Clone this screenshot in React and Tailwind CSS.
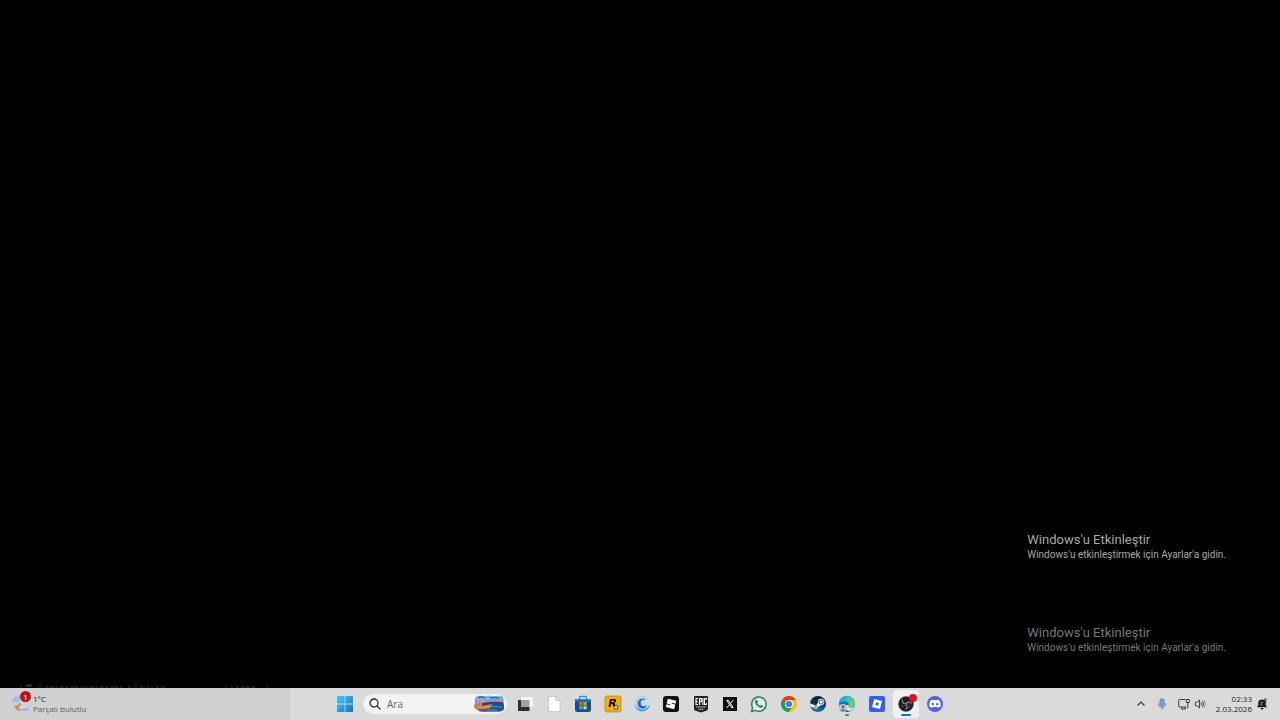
import React from "react";

const Start = () => (
  <svg viewBox="0 0 16 16" className="h-4 w-4">
    <defs>
      <linearGradient id="start" x1="0" y1="0" x2="1" y2="1">
        <stop offset="0" stopColor="#4fc5f0" />
        <stop offset="1" stopColor="#0a76c8" />
      </linearGradient>
    </defs>
    <path fill="url(#start)" d="M0 .6Q0 0 .6 0H7.6V7.6H0zM8.4 0H15.4Q16 0 16 .6V7.6H8.4zM0 8.4H7.6V16H.6Q0 16 0 15.4zM8.4 8.4H16V15.4Q16 16 15.4 16H8.4z" />
  </svg>
);

const Search = () => (
  <svg viewBox="0 0 12 12" className="h-3 w-3 shrink-0" fill="none" stroke="#2b2b2b" strokeWidth="1.3" strokeLinecap="round">
    <circle cx="5" cy="5" r="4" />
    <path d="M8 8l3 3" />
  </svg>
);

const SearchArt = () => (
  <svg viewBox="0 0 32 18" className="h-[18px] w-8 shrink-0">
    <path d="M3 2Q6 0 10 1.5Q16 0 21 1.5Q27 0 30 2Q31 4 30.500 7L31 14Q30 16.500 26 16.500H12Q6 17 4 15L1 12L2 8Q1 5 3 2z" fill="#8d8fc4" />
    <path d="M2.500 3Q6 0 10 1.500Q16 0 21 1.500Q27 0 30 3L29 5Q22 4 17 5T3 5z" fill="#78b6e2" />
    <path d="M5 3Q8 1 12 3M17 3.500Q21 1.500 26 3.500" stroke="#38679d" strokeWidth="1.300" fill="none" />
    <path d="M4 6Q9 4 14 6T26 5L30 7V10H3z" fill="#c493b4" />
    <path d="M9 8Q19 6 30 7L31 11H9z" fill="#393f72" />
    <path d="M12 10Q20 8 31 10V14Q29 17 23 16.500H9z" fill="#1d5798" />
    <path d="M16 13Q21 10 29 12.500M14 15H24" stroke="#4ca5d8" fill="none" strokeWidth=".8" />
    <path d="M1 10L5 9L7 6L8 11L19 9Q19 14 14 14Q8 16 3 14z" fill="#cf7243" />
    <path d="M3 11.500Q9 13.500 17 11" stroke="#f0ad6b" fill="none" />
    <path d="M5 15Q12 13 17 15.500L13 16.500H7z" fill="#37659f" />
  </svg>
);

const Weather = () => (
  <svg viewBox="0 0 18 18" className="h-[18px] w-[18px]">
    <path d="M2 7.500a2 2 0 0 1 0-4 3.500 3.500 0 0 1 6-2v6z" fill="#a3c1e8" />
    <path d="M2 10.500Q6 11.500 7.500 8Q9 8 9.500 9.500L8.500 16Q4 16 2 10.500z" fill="#df8c37" />
    <path d="M8.500 15.500a2.600 2.600 0 0 1 0-5 4 4 0 0 1 6.500-.5 2.800 2.800 0 0 1 0 5.500z" fill="#c3d4ec" />
    <path d="M8.500 15.500a2.600 2.600 0 0 1-2-2Q11 15.500 17 12.500Q17 15 15 15.500z" fill="#93afd8" />
  </svg>
);

const TaskView = () => (
  <svg viewBox="0 0 18 18" className="h-[18px] w-[18px]">
    <path d="M2 5H13.500V16H2z" fill="#2e2e2e" />
    <path d="M5 2H17V12H5z" fill="#f3f3f3" />
    <path d="M5 5H13.500V12H5z" fill="#a4a4a4" />
  </svg>
);

const Page = () => (
  <svg viewBox="0 0 18 18" className="h-[18px] w-[18px]">
    <path d="M3.500 1.500H11L15 5.500V16.500H3.500z" fill="#fdfdfd" stroke="#b9b9b9" strokeWidth=".6" />
    <path d="M11 1.500V5.500H15" fill="#e2e2e2" stroke="#a8a8a8" strokeWidth=".6" />
  </svg>
);

const Store = () => (
  <svg viewBox="0 0 18 18" className="h-[18px] w-[18px]">
    <path d="M5.500 5V2.500Q5.500 1.500 6.500 1.500H11.500Q12.500 1.500 12.500 2.500V5" fill="none" stroke="#2999dc" strokeWidth="1.3" />
    <path d="M1 4.500H17V14.500Q17 17 14.500 17H3.500Q1 17 1 14.500z" fill="#164f86" />
    <path d="M1 4.500H17V7H1z" fill="#1b6dab" />
    <path d="M5.300 7H8.600V10.300H5.300z" fill="#ee6242" />
    <path d="M9.400 7H12.700V10.300H9.400z" fill="#86c440" />
    <path d="M5.300 11.100H8.600V14.400H5.300z" fill="#36aeea" />
    <path d="M9.400 11.100H12.700V14.400H9.400z" fill="#f7c335" />
  </svg>
);

const Rockstar = () => (
  <svg viewBox="0 0 18 18" className="h-[18px] w-[18px]">
    <rect x="1" y="1" width="16" height="16" rx="2" fill="#f7ae15" stroke="#a8730f" strokeWidth=".6" />
    <path fill="#16120a" fillRule="evenodd" d="M6 4H10.300Q12.600 4 12.100 6Q11.800 7.700 10.300 8Q11.300 8.500 11 10.200L10.800 11H8.900Q9.100 8.900 8 8.900H7.100L6.500 12H4.500zM7.600 5.500L7.200 7.300H9Q9.900 7.300 10.100 6.300Q10.200 5.500 9.500 5.500z" />
    <path d="M12 9.500l.7 1.800h2l-1.600 1.300.6 2-1.700-1.200-1.800 1.200.6-2-1.600-1.300h2.100z" fill="#fff" stroke="#16120a" strokeWidth=".6" />
  </svg>
);

const Swirl = () => (
  <svg viewBox="0 0 18 18" className="h-[18px] w-[18px]">
    <circle cx="9" cy="9" r="7.500" fill="#76c5ee" />
    <path d="M1.500 8Q3 1 11 1.500Q15 2 16.500 4Q9 2 6 6T6 14Q2 13 1.500 8z" fill="#a5dbf4" />
    <circle cx="9.500" cy="8.500" r="4.800" fill="#4850bb" />
    <circle cx="11" cy="8" r="3.300" fill="#c4d9f6" />
    <path d="M11 3.500Q16 4 16.500 9Q16 14 11 15Q15 11 14 7.500Q13.500 5 11 3.500z" fill="#d5edfa" />
    <path d="M2 10Q5 15.500 10 14.500Q14 14 16.500 9Q17 16 9 16.500Q3 16 2 10z" fill="#46a9df" />
  </svg>
);

const RobloxStudio = () => (
  <svg viewBox="0 0 18 18" className="h-[18px] w-[18px]">
    <rect x="1" y="1" width="16" height="16" rx="3" fill="#111" />
    <path d="M5.700 3.700L14.200 5.800L13.500 8.700L9.800 7.800L9.600 8.600L13.200 9.500L12.200 14.200L3.800 12.100L4.500 9.300L8.200 10.200L8.400 9.400L4.700 8.500z" fill="#fff" />
  </svg>
);

const Epic = () => (
  <svg viewBox="0 0 18 18" className="h-[18px] w-[18px]">
    <path d="M3 1H15Q16 1 16 2V14Q16 15 15 15.400L9 17.500L3 15.400Q2 15 2 14V2Q2 1 3 1z" fill="#222" />
    <path d="M6 3.500H4V9.500H6M4 6.500H5.800M7.500 10V3.500H9.300V6.800H7.500M10.900 3V10M14.300 5V3.500H12.500V9.500H14.300V8" fill="none" stroke="#fff" strokeWidth="1.100" />
    <path d="M4 12H14M6.500 14.300H11.500" stroke="#bbb" strokeWidth=".9" />
  </svg>
);

const XApp = () => (
  <svg viewBox="0 0 18 18" className="h-[18px] w-[18px]">
    <path d="M2 2H16V16H2z" fill="#0d0d0d" />
    <path d="M5.700 5.300H7.500L12.300 12.700H10.500z" fill="#555" stroke="#fff" strokeWidth=".9" />
    <path d="M12.400 5L9.700 8.200M8.300 9.700L5.500 13" stroke="#fff" />
  </svg>
);

const WhatsApp = () => (
  <svg viewBox="0 0 18 18" className="h-[18px] w-[18px]">
    <path d="M1.500 16.500L2.600 12.600A7.200 7.200 0 1 1 5.400 15.400z" fill="#e4eae6" stroke="#25845c" strokeWidth="1.500" strokeLinejoin="round" />
    <path d="M6 4.900Q6.800 4.300 7.300 5.200L7.900 6.700Q8 7.200 7.200 8Q8.100 9.900 10.200 10.800Q11 9.800 11.400 9.900L13 10.700Q13.400 11.100 12.800 12Q11.700 13.400 9 12.200Q6 10.700 5 7.800Q4.600 6 6 4.900z" fill="#25845c" />
  </svg>
);

const Chrome = () => (
  <svg viewBox="0 0 18 18" className="h-[18px] w-[18px]">
    <circle cx="9" cy="9" r="8" fill="#fbc116" />
    <path d="M9 9L2.070 5A8 8 0 0 1 15.930 5H9z" fill="#e33b2e" />
    <path d="M9 9L2.070 5A8 8 0 0 0 9 17L12.460 11z" fill="#2a9e4b" />
    <circle cx="9" cy="9" r="4" fill="#fff" />
    <circle cx="9" cy="9" r="3.100" fill="#3b7ded" />
  </svg>
);

const Steam = () => (
  <svg viewBox="0 0 18 18" className="h-[18px] w-[18px]">
    <defs>
      <linearGradient id="steam" x1="0" y1="0" x2="0" y2="1">
        <stop offset="0" stopColor="#101d3c" />
        <stop offset=".5" stopColor="#122f55" />
        <stop offset="1" stopColor="#1b79ab" />
      </linearGradient>
    </defs>
    <circle cx="9" cy="9" r="8" fill="url(#steam)" />
    <path d="M1 8.200L5.800 10.200Q6.700 9.600 7.600 9.700L9 7.500A3.200 3.200 0 1 1 12.200 10.200L9.300 12.100A2.300 2.300 0 0 1 4.900 12.900L1.500 11.400z" fill="#f2f5f8" />
    <circle cx="12.100" cy="7" r="2.100" fill="#f2f5f8" stroke="#14325a" strokeWidth=".8" />
    <circle cx="7" cy="12" r="1.400" fill="none" stroke="#164672" strokeWidth=".7" />
  </svg>
);

const Edge = () => (
  <svg viewBox="0 0 18 18" className="h-[18px] w-[18px]">
    <defs>
      <linearGradient id="edge" x1="0" y1="0" x2="1" y2=".4">
        <stop offset="0" stopColor="#1d8fd8" />
        <stop offset=".5" stopColor="#2fbecb" />
        <stop offset="1" stopColor="#67d368" />
      </linearGradient>
    </defs>
    <circle cx="9" cy="9" r="8" fill="#1670bd" />
    <path d="M1 9A8 8 0 0 1 17 8.500Q17 12.500 13 12.500Q10 12.500 10.500 10.500Q11.500 7 7.500 6.300Q3 6 1 9z" fill="url(#edge)" />
    <path d="M10.500 10.500Q10 12.500 13 12.800Q15 12.800 16.300 11.800Q14 16.500 10 15.500Q7 14 8 10z" fill="#dcecf5" />
    <circle cx="5" cy="13" r="4" fill="#cac7c1" />
    <circle cx="5" cy="11.800" r="1.500" fill="#6f6763" />
    <path d="M2.200 15.500Q2.400 13.800 5 13.800T7.800 15.500Q5 18 2.200 15.500z" fill="#858588" />
  </svg>
);

const Roblox = () => (
  <svg viewBox="0 0 18 18" className="h-[18px] w-[18px]">
    <rect x="1" y="1" width="16" height="16" rx="2" fill="#345cf3" />
    <path fill="#fff" fillRule="evenodd" d="M6.300 4L14 6.100L11.900 14L4 11.900zM8.100 7.300L7.300 10.100L10.100 10.800L10.900 8z" />
  </svg>
);

const Obs = () => (
  <svg viewBox="0 0 18 18" className="h-[18px] w-[18px]">
    <circle cx="9" cy="9" r="7.500" fill="#1d1e20" stroke="#4b4b4d" strokeWidth=".5" />
    <path d="M9 9Q4.500 8.500 5.500 4.500M9 9Q11.500 5.500 14.500 8.500M9 9Q11.500 12.500 8.500 14.500" fill="none" stroke="#929295" strokeWidth="1.100" />
    <path d="M4 10.500Q6 12.500 8 10.500M11 13Q13.500 12 13 9.500" fill="none" stroke="#58585b" strokeWidth=".8" />
  </svg>
);

const Discord = () => (
  <svg viewBox="0 0 18 18" className="h-[18px] w-[18px]">
    <circle cx="9" cy="9" r="8" fill="#5a61dc" />
    <path fill="#fff" fillRule="evenodd" d="M7.200 5.200L6.800 4.700Q5.300 5 4.500 5.500Q3 8 3.300 11.300Q4.400 12.500 6.200 12.800L6.800 11.800Q9 12.300 11.200 11.800L11.800 12.800Q13.600 12.500 14.700 11.300Q15 8 13.500 5.500Q12.700 5 11.200 4.700L10.800 5.200Q9 5 7.200 5.200zM6.900 7.800a1.200 1.300 0 1 0 .01 0zM11.100 7.800a1.200 1.300 0 1 0 .01 0z" />
  </svg>
);

const Chevron = () => (
  <svg viewBox="0 0 10 10" className="h-2.5 w-2.5" fill="none" stroke="#333" strokeWidth="1.100">
    <path d="M1.500 6.500L5 3L8.500 6.500" />
  </svg>
);

const Mic = () => (
  <svg viewBox="0 0 12 12" className="h-3 w-3">
    <rect x="4" y=".8" width="4" height="6.700" rx="2" fill="#7fa4da" stroke="#4370b5" strokeWidth=".8" />
    <path d="M2.300 5.500Q2.300 9 6 9T9.700 5.500M6 9V11.500" fill="none" stroke="#4370b5" strokeWidth=".9" />
  </svg>
);

const Network = () => (
  <svg viewBox="0 0 12 12" className="h-3 w-3" fill="none" stroke="#333">
    <path d="M7.500 1.500H1.500Q.7 1.500 .7 2.300V8.200Q.7 9 1.500 9H8.500M3 11H8M4 9V11M7 9V11" strokeWidth=".9" />
    <path d="M8.300 1.500H11.300V4.500H8.300zM9.800 4.500V10.500" strokeWidth=".9" />
  </svg>
);

const Volume = () => (
  <svg viewBox="0 0 12 12" className="h-3 w-3" fill="none" stroke="#333" strokeWidth=".9" strokeLinejoin="round">
    <path d="M1.300 4.300H3L5.500 2V10L3 7.700H1.300z" />
    <path d="M7 4.500Q8.200 6 7 7.500M8.500 3.200Q10.500 6 8.500 8.800" />
    <path d="M10 2Q12.600 6 10 10" stroke="#888" />
  </svg>
);

const Bell = () => (
  <svg viewBox="0 0 12 12" className="h-3 w-3">
    <path d="M1 9.300L2.200 7V4.700Q2.200 1.500 6 1.500T9.800 4.700V7L11 9.300zM4.300 10H7.700Q7.200 11.500 6 11.500T4.300 10z" fill="#222" />
    <path d="M4.500 4.500H6.500L4.500 7H6.500" fill="none" stroke="#aaa" strokeWidth=".6" />
    <path d="M8 1.200H10.700L8 3.900H10.700" fill="none" stroke="#222" strokeWidth=".8" />
  </svg>
);

// Görev çubuğunun arkasında kalan soluk yansıma
const Reflection = () => (
  <svg aria-hidden="true" viewBox="0 0 256 4" className="h-1 w-64 self-start">
    <path d="M10 1.500H16" stroke="#14301a" strokeWidth="3" />
    <path d="M24 0V4M132 0V4M136 1V4M5 0V4M120 0V4M210 1V4M216 1V4M226 0V4M251 1V4" stroke="#272727" />
    <path d="M29 3H106M112 3H117M124 3H130M140 3H150M220 3H240" stroke="#1c1c1c" strokeWidth="2" strokeDasharray="3 2 4 1" />
  </svg>
);

const apps = [
  { name: "Görev Görünümü", icon: <TaskView /> },
  { name: "Belge", icon: <Page /> },
  { name: "Microsoft Store", icon: <Store /> },
  { name: "Rockstar Games", icon: <Rockstar /> },
  { name: "Tarayıcı", icon: <Swirl /> },
  { name: "Roblox Studio", icon: <RobloxStudio /> },
  { name: "Epic Games", icon: <Epic /> },
  { name: "X", icon: <XApp /> },
  { name: "WhatsApp", icon: <WhatsApp /> },
  { name: "Chrome", icon: <Chrome /> },
  { name: "Steam", icon: <Steam /> },
  { name: "Edge", icon: <Edge />, running: true },
  { name: "Roblox", icon: <Roblox /> },
  { name: "OBS Studio", icon: <Obs />, active: true },
  { name: "Discord", icon: <Discord /> },
];

const Watermark = ({ className }) => (
  <div className={className}>
    <p className="text-[13px] leading-4">Windows'u Etkinleştir</p>
    <p className="text-[10px] leading-[14px]">Windows'u etkinleştirmek için Ayarlar'a gidin.</p>
  </div>
);

const AppButton = ({ app }) => (
  <button
    aria-label={app.name}
    className={`relative flex h-7 w-[26px] items-center justify-center rounded-sm ${app.active ? "bg-[#f0f0f0]" : ""}`}
  >
    {app.icon}
    {app.active && <span className="absolute top-1 right-0.5 h-2 w-2 rounded-full bg-[#ed0c1c]"></span>}
    {app.active && <span className="absolute bottom-0.5 h-0.5 w-2.5 rounded-full bg-[#1473c4]"></span>}
    {app.running && <span className="absolute bottom-0.5 h-0.5 w-1 rounded-full bg-[#777777]"></span>}
  </button>
);

const Taskbar = () => (
  <footer className="grid h-8 grid-cols-[1fr_auto_1fr] items-center bg-[#dadada] text-[#222222]">
    {/* Hava durumu */}
    <button className="mr-10 flex h-full items-center self-stretch bg-[#d1d1d1] pl-3 text-left">
      <span className="relative mr-[3px]">
        <Weather />
        <span className="absolute -top-1 left-2 flex h-[11px] w-[11px] items-center justify-center rounded-full bg-[#b4161e] text-[8px] leading-none text-white">1</span>
      </span>
      <span className="flex flex-col text-[8px] leading-[10px]">
        <span>1°C</span>
        <span className="text-[#606060]">Parçalı bulutlu</span>
      </span>
    </button>

    <div className="flex items-center">
      <button aria-label="Başlat" className="flex h-7 w-[30px] items-center justify-center">
        <Start />
      </button>
      <label className="mx-[3px] flex h-5 w-36 items-center rounded-full bg-[#f3f3f3] pr-0.5 pl-1.5">
        <Search />
        <input type="text" aria-label="Ara" placeholder="Ara" className="ml-1.5 w-full min-w-0 bg-transparent text-[10px] leading-4 outline-none placeholder:text-[#666666]" />
        <SearchArt />
      </label>
      <div className="grid w-[440px] grid-cols-15 justify-items-center">
        {apps.map((app) => (
          <AppButton key={app.name} app={app} />
        ))}
      </div>
    </div>

    {/* Sistem tepsisi */}
    <div className="flex items-center justify-end pr-3">
      <button aria-label="Gizli simgeler" className="mr-2.5"><Chevron /></button>
      <button aria-label="Mikrofon" className="mr-2.5"><Mic /></button>
      <button aria-label="Ağ ve ses" className="mr-2.5 flex gap-1">
        <Network />
        <Volume />
      </button>
      <button className="mr-1 text-right text-[8px] leading-[10px]">
        <span className="block">02:33</span>
        <span className="block">2.03.2026</span>
      </button>
      <button aria-label="Bildirimler"><Bell /></button>
    </div>
  </footer>
);

const App = () => {
  return (
    <div className="flex min-h-screen flex-col bg-black font-['Open_Sans','Noto_Sans',sans-serif]">
      <main className="flex flex-1 flex-col items-end justify-end pl-4">
        <div className="mr-[54px] mb-7 flex flex-col gap-[63px] pb-px font-[Roboto,'Noto_Sans',sans-serif]">
          <Watermark className="text-[#a8a8a8]" />
          <Watermark className="text-[#777777]" />
        </div>
        <Reflection />
      </main>
      <Taskbar />
    </div>
  );
};

export default App;
